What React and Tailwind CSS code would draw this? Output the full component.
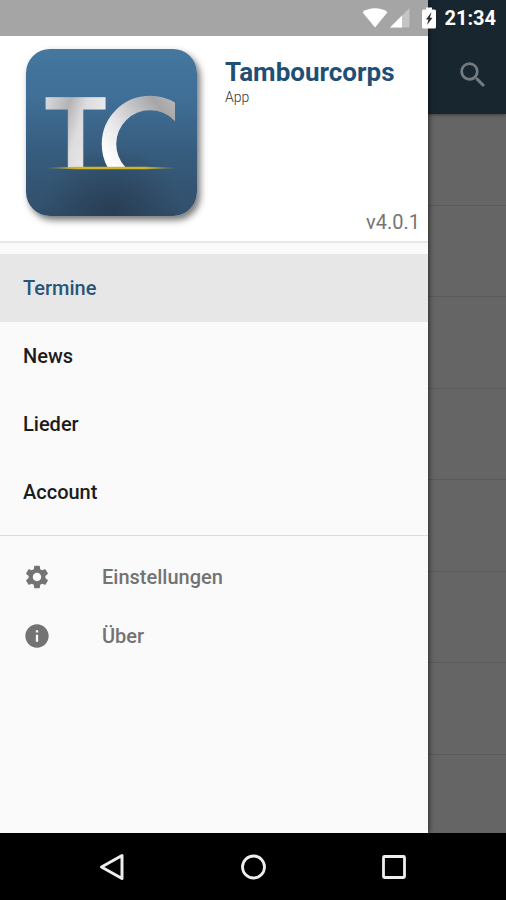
import { useState } from 'react'
import { MdInfo, MdSearch, MdSettings } from 'react-icons/md'
import clsx from 'clsx'

const pages = ['Termine', 'News', 'Lieder', 'Account']

const extras = [
  { label: 'Einstellungen', icon: MdSettings },
  { label: 'Über', icon: MdInfo },
]

function Logo() {
  return (
    <svg viewBox="0 0 171 167" className="w-[171px] h-[167px] rounded-[24px] shadow-[3px_4px_7px_rgba(0,0,0,0.55)]" role="img" aria-label="TC">
      <defs>
        <linearGradient id="tile" x1="0" y1="0" x2="0" y2="1">
          <stop offset="0" stopColor="#45779f" />
          <stop offset="0.3" stopColor="#3f6e96" />
          <stop offset="0.65" stopColor="#365b7b" />
          <stop offset="1" stopColor="#314f6a" />
        </linearGradient>
        <radialGradient id="shade" cx="0.5" cy="1" r="0.42">
          <stop offset="0" stopColor="#27384d" stopOpacity="0.8" />
          <stop offset="1" stopColor="#27384d" stopOpacity="0" />
        </radialGradient>
        <linearGradient id="silverT" x1="0" y1="0" x2="1" y2="0.6">
          <stop offset="0" stopColor="#e6e6e8" />
          <stop offset="0.4" stopColor="#b4b4b7" />
          <stop offset="0.6" stopColor="#dcdcde" />
          <stop offset="1" stopColor="#f2f2f2" />
        </linearGradient>
        <linearGradient id="silverC" gradientUnits="userSpaceOnUse" x1="78" y1="104" x2="150" y2="50">
          <stop offset="0" stopColor="#ffffff" />
          <stop offset="0.3" stopColor="#e6e6e8" />
          <stop offset="0.8" stopColor="#a6a6a8" />
          <stop offset="1" stopColor="#b8b8ba" />
        </linearGradient>
        <linearGradient id="gold" x1="0" y1="0" x2="1" y2="0">
          <stop offset="0" stopColor="#b5a83e" stopOpacity="0.5" />
          <stop offset="0.25" stopColor="#cdb52c" />
          <stop offset="0.75" stopColor="#cdb52c" />
          <stop offset="1" stopColor="#b5a83e" stopOpacity="0.5" />
        </linearGradient>
        <clipPath id="horizon">
          <rect x="70" y="40" width="79" height="50" />
          <rect x="70" y="90" width="40" height="28" />
        </clipPath>
      </defs>
      <rect width="171" height="167" fill="url(#tile)" />
      <rect width="171" height="167" fill="url(#shade)" />
      <text
        x="19"
        y="118"
        fontSize="100"
        fill="url(#silverT)"
        stroke="url(#silverT)"
        className="font-['Liberation_Sans',sans-serif] font-bold"
      >
        T
      </text>
      <circle cx="124" cy="95" r="41" fill="none" stroke="url(#silverC)" strokeWidth="14.5" clipPath="url(#horizon)" />
      <path d="M20 119 L50 117.8 H120 L150 119 L120 120.2 H50 Z" fill="url(#gold)" />
    </svg>
  )
}

function StatusBar() {
  return (
    <div className="absolute top-0 inset-x-0 z-20 h-9 flex items-center justify-end pr-[10px] text-white">
      <svg viewBox="0 0 26 20" className="w-[26px] h-5" fill="currentColor">
        <path d="M13 19.5 L0.5 4.2 C4 1.4 8.3 0.3 13 0.3 C17.7 0.3 22 1.4 25.5 4.2 Z" />
      </svg>
      <svg viewBox="0 0 20 20" className="ml-[2px] w-5 h-5" fill="currentColor">
        <path d="M0 19.5 L19.5 0 V19.5 Z" opacity="0.35" />
        <path d="M0 19.5 L12 7.5 V19.5 Z" />
      </svg>
      <svg viewBox="0 0 14 22" className="ml-3 w-[14px] h-[22px]">
        <path d="M4 0.5 H10 V2.5 H12.5 Q14 2.5 14 4 V20 Q14 21.5 12.5 21.5 H1.5 Q0 21.5 0 20 V4 Q0 2.5 1.5 2.5 H4 Z" fill="#fff" />
        <path d="M9.5 5 L4 12.5 H6.5 L5 18 L10.5 10.8 H7.8 Z" fill="#2b2b2b" />
      </svg>
      <span className="ml-2 text-xl font-bold">21:34</span>
    </div>
  )
}

function DimmedPage() {
  return (
    <div className="flex-1 bg-[#656565] overflow-hidden">
      <header className="h-[114px] pt-9 pr-4 flex items-center justify-end bg-[#182630] shadow-[0_1px_3px_rgba(0,0,0,0.4)]">
        <button type="button" aria-label="Suchen" className="text-[#747b80]">
          <MdSearch className="w-[34px] h-[34px]" />
        </button>
      </header>
      <ul>
        {[1, 2, 3, 4, 5, 6, 7].map((n) => (
          <li key={n} className="odd:h-[92px] even:h-[91px] border-b border-[#5a5a5a]" />
        ))}
      </ul>
    </div>
  )
}

function Drawer() {
  const [active, setActive] = useState('Termine')

  return (
    <aside className="absolute inset-y-0 left-0 z-10 w-[calc(100%-78px)] bg-[#fafafa] shadow-[1px_0_5px_rgba(0,0,0,0.6)]">
      <div className="h-9 bg-[#a5a5a5]" />
      <div className="h-[207px] bg-white border-b-2 border-[#e8e8e8] flex pl-[26px] pr-2 pt-[13px] pb-[5px]">
        <Logo />
        <div className="flex-1 pl-7 pt-2 flex flex-col">
          <h1 className="text-[26px] leading-[30px] font-bold text-[#1f4f75]">Tambourcorps</h1>
          <p className="text-sm leading-5 font-light text-[#333]">App</p>
          <p className="mt-auto text-right text-xl leading-7 text-[#757575]">v4.0.1</p>
        </div>
      </div>

      <nav>
        <div className="pt-[11px] pb-[9px] border-b border-[#dcdcdc]">
          {pages.map((page) => (
            <button
              key={page}
              type="button"
              onClick={() => setActive(page)}
              className={clsx(
                'block w-full h-[68px] pl-[23px] text-left text-xl font-medium',
                page === active ? 'bg-[#e7e7e7] text-[#2a5578]' : 'text-[#1c1c1c]'
              )}
            >
              {page}
            </button>
          ))}
        </div>
        <div className="pt-[11px]">
          {extras.map(({ label, icon: Icon }) => (
            <button
              key={label}
              type="button"
              className="flex items-center w-full h-[59px] pl-[23px] gap-[51px] text-xl font-medium text-[#737373]"
            >
              <Icon className="w-7 h-7" />
              {label}
            </button>
          ))}
        </div>
      </nav>
    </aside>
  )
}

function NavBar() {
  return (
    <div className="h-[67px] bg-black flex justify-center items-center text-[#eee]">
      <button type="button" aria-label="Zurück" className="w-[141px] h-full flex justify-center items-center">
        <svg viewBox="0 0 28 28" className="w-7 h-7" fill="none" stroke="currentColor" strokeWidth="3" strokeLinejoin="round">
          <path d="M24 2.5 V25.5 L3.5 14 Z" />
        </svg>
      </button>
      <button type="button" aria-label="Startseite" className="w-[141px] h-full flex justify-center items-center">
        <svg viewBox="0 0 28 28" className="w-7 h-7" fill="none" stroke="currentColor" strokeWidth="2.8">
          <circle cx="14.5" cy="14" r="11" />
        </svg>
      </button>
      <button type="button" aria-label="Übersicht" className="w-[141px] h-full flex justify-center items-center">
        <svg viewBox="0 0 28 28" className="w-7 h-7" fill="none" stroke="currentColor" strokeWidth="2.8">
          <rect x="3.5" y="3.5" width="21" height="21" rx="1" />
        </svg>
      </button>
    </div>
  )
}

export default function App() {
  return (
    <div className="min-h-screen flex flex-col font-[Roboto,sans-serif]">
      <div className="relative flex-1 flex flex-col overflow-hidden">
        <DimmedPage />
        <Drawer />
        <StatusBar />
      </div>
      <NavBar />
    </div>
  )
}
